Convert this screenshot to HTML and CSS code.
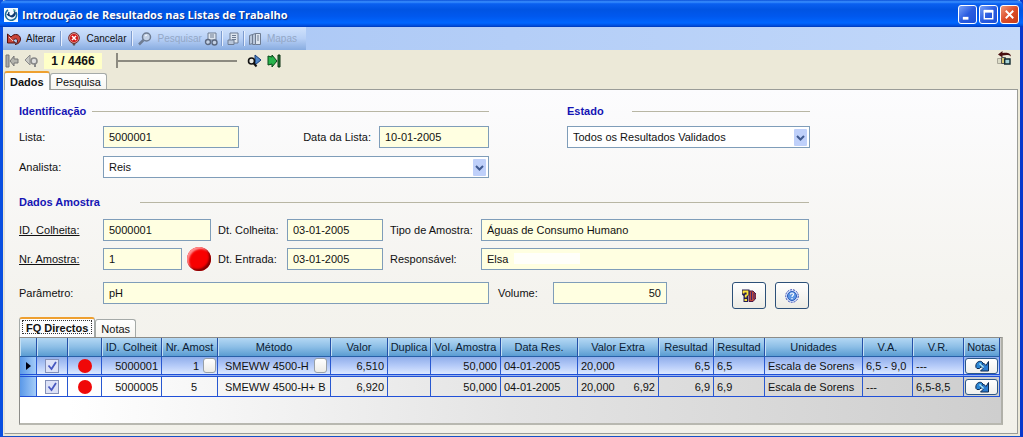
FILE: index.html
```html
<!DOCTYPE html>
<html lang="pt">
<head>
<meta charset="utf-8">
<title>Introdução de Resultados nas Listas de Trabalho</title>
<link rel="stylesheet" href="styles.css">
</head>
<body>
<div class="window">
  <header class="titlebar">
    <svg class="app-icon" viewBox="0 0 14 14" aria-hidden="true"><rect width="14" height="14" fill="#f4fbff"/><path d="M4 2a5.600 5.600 0 1 0 8 2" fill="none" stroke="#1c6f9c" stroke-width="1.500"/><path d="M5 4a3.200 3.200 0 1 0 5-1M3 6c2 3 5 3 8-1" fill="none" stroke="#123c70" stroke-width="1.300"/><path d="M9 1l3 1-2 2z" fill="#49a8a8"/></svg>
    <h1 class="title">Introdução de Resultados nas Listas de Trabalho</h1>
    <div class="caption-buttons">
      <button class="caption" aria-label="Minimizar"><svg viewBox="0 0 16 16"><path d="M3 12h6" stroke="#fff" stroke-width="3"/></svg></button>
      <button class="caption" aria-label="Maximizar"><svg viewBox="0 0 16 16"><path d="M3.500 4.500h9v8h-9zM3 4h10" fill="none" stroke="#fff" stroke-width="1.500"/><path d="M3 4.500h10" stroke="#fff" stroke-width="3"/></svg></button>
      <button class="caption caption-close" aria-label="Fechar"><svg viewBox="0 0 16 16"><path d="M4 4l8 8M12 4l-8 8" stroke="#fff" stroke-width="2"/></svg></button>
    </div>
  </header>

  <div class="toolbar-row">
    <div class="toolbar" role="toolbar">
      <button class="tool"><svg class="icon" viewBox="0 0 14 14"><path d="M.5 2v9h8L6 8.500c2-2.500 4.500-2 4.500.5 0 1.500-1 2.500-2.500 3.500 3.500-.5 5.500-2.500 5.500-5.500 0-4.500-6-6.500-9.500-2z" fill="#c8463a" stroke="#501010"/><path d="M2 5l4 4" stroke="#f4c8c0"/></svg>Alterar</button>
      <span class="sep"></span>
      <button class="tool"><svg class="icon" viewBox="0 0 14 14"><path d="M5 9h4l-1 4.500H6z" fill="#555"/><circle cx="7" cy="6" r="5.300" fill="#e8b0a8" stroke="#702020"/><circle cx="7" cy="6" r="4" fill="#d01818"/><path d="M5 4l4 4M9 4L5 8" stroke="#fff" stroke-width="1.500"/></svg>Cancelar</button>
      <span class="sep"></span>
      <button class="tool" disabled><svg class="icon" viewBox="0 0 14 14"><circle cx="8.500" cy="5" r="4" fill="#c4d2e6" stroke="#6e7c92" stroke-width="1.500"/><path d="M5.500 8L1 12.500" stroke="#6e7c92" stroke-width="2.500"/><path d="M7 4l2-1" stroke="#fff"/></svg>Pesquisar</button>
      <button class="tool tool-tight" disabled aria-label="Ver"><svg class="icon" viewBox="0 0 14 14"><path d="M4 1h8v7H4z" fill="#dde5ef" stroke="#6e7c92"/><path d="M6 3h4M6 5h4" stroke="#6e7c92"/><circle cx="4" cy="10" r="2.500" fill="#c4d2e6" stroke="#5c6980" stroke-width="1.400"/><circle cx="10.500" cy="10.500" r="2.500" fill="#c4d2e6" stroke="#5c6980" stroke-width="1.400"/></svg></button>
      <span class="sep sep-tight"></span>
      <button class="tool" disabled aria-label="Relatório"><svg class="icon" viewBox="0 0 14 14"><path d="M4 1h8v10H4z" fill="#dde5ef" stroke="#6e7c92"/><path d="M6 3.500h4M6 5.500h4M6 7.500h4" stroke="#6e7c92"/><path d="M2 8h6v4.500H2z" fill="#b8c6da" stroke="#6e7c92"/></svg></button>
      <span class="sep sep-tight"></span>
      <button class="tool" disabled><svg class="icon" viewBox="0 0 14 14"><path d="M1.500 3.500l3-1v9l-3 1zM4.500 2.500l3-1v11h-3z" fill="#b8c6da" stroke="#6e7c92"/><path d="M7.500 1.500h5v11h-5z" fill="#dde5ef" stroke="#6e7c92"/><path d="M9 4h2M9 6h2M9 8h2" stroke="#6e7c92"/></svg>Mapas</button>
    </div>
  </div>

  <div class="nav">
    <button class="nav-button" disabled aria-label="Primeiro"><svg class="icon" viewBox="0 0 14 14"><path d="M1 1h3v12H1z" fill="#aaa" stroke="#777"/><path d="M5 7l4-5v3h4v4H9v3z" fill="#b4b4ae" stroke="#777"/></svg></button>
    <button class="nav-button" disabled aria-label="Anterior"><svg class="icon" viewBox="0 0 14 14"><path d="M0 6l5-5v10z" fill="#c8c8c4" stroke="#8a8a8a"/><circle cx="9" cy="7" r="3" fill="#ddd" stroke="#888" stroke-width="1.600"/><path d="M10 9v4" stroke="#888" stroke-width="2"/></svg></button>
    <output class="counter">1 / 4466</output>
    <input class="slider" type="range" min="1" max="4466" value="1" aria-label="Registo">
    <button class="nav-button" aria-label="Seguinte"><svg class="icon" viewBox="0 0 14 14"><path d="M8 1l6 5-6 5z" fill="#4f86c8" stroke="#153a78"/><circle cx="4.500" cy="7" r="3" fill="#e8e8e0" stroke="#111" stroke-width="1.600"/><path d="M6.500 9l3 3.500" stroke="#111" stroke-width="2"/></svg></button>
    <button class="nav-button" aria-label="Último"><svg class="icon" viewBox="0 0 14 14"><path d="M1 2l4 1V1l5 6-5 6v-3l-4 1z" fill="#28b44c" stroke="#064818"/><path d="M11 1h2v12h-2z" fill="#28803c" stroke="#0a3010"/></svg></button>
    <button class="nav-button nav-exit" aria-label="Sair"><svg class="icon" viewBox="0 0 14 14"><path d="M1 3.500L5.500 0v2c4.500-1 8.500 0 8.500 3.500C12 3.500 9 4 5.500 4.500v2z" fill="#4a1010"/><path d="M.5 7.500h4v5h-4z" fill="#dcdcc8" stroke="#aaa89a"/><path d="M4.500 6.500h4v6h-4z" fill="#d8c878" stroke="#555"/><path d="M7.700 8h5.300v5H7.700z" fill="#a8d4d8" stroke="#102830" stroke-width="1.400"/></svg></button>
  </div>

  <div class="tabs" role="tablist">
    <button class="tab tab-active" role="tab" aria-selected="true">Dados</button>
    <button class="tab" role="tab" aria-selected="false">Pesquisa</button>
  </div>

  <main class="panel">
    <div class="groups">
      <section class="group group-id">
        <h2 class="legend">Identificação</h2>
        <div class="id-grid">
          <label for="lista">Lista:</label>
          <input class="field" id="lista" value="5000001">
          <label class="label-end" for="data">Data da Lista:</label>
          <input class="field" id="data" value="10-01-2005">
          <label for="analista">Analista:</label>
          <select class="field combo span-rest" id="analista"><option>Reis</option></select>
        </div>
      </section>
      <section class="group group-state">
        <h2 class="legend legend-state">Estado</h2>
        <select class="field combo" aria-label="Estado"><option>Todos os Resultados Validados</option></select>
      </section>
    </div>

    <section class="group group-sample">
      <h2 class="legend legend-sample">Dados Amostra</h2>
      <div class="sample-grid">
        <label for="colheita"><a class="link" href="#colheita">ID. Colheita:</a></label>
        <input class="field" id="colheita" value="5000001">
        <label class="label-inner" for="dtc">Dt. Colheita:</label>
        <input class="field" id="dtc" value="03-01-2005">
        <label class="label-inner" for="tipo">Tipo de Amostra:</label>
        <input class="field" id="tipo" value="Águas de Consumo Humano">
        <label for="nr"><a class="link" href="#nr">Nr. Amostra:</a></label>
        <div class="with-ball"><input class="field" id="nr" value="1"><span class="ball-box"><span class="ball ball-large"></span></span></div>
        <label class="label-inner" for="dte">Dt. Entrada:</label>
        <input class="field" id="dte" value="03-01-2005">
        <label class="label-inner" for="resp">Responsável:</label>
        <input class="field field-masked" id="resp" value="Elsa">
      </div>
      <div class="param-row">
        <label class="label-first" for="param">Parâmetro:</label>
        <input class="field param" id="param" value="pH">
        <label class="label-volume" for="volume">Volume:</label>
        <input class="field volume" id="volume" value="50">
        <div class="actions">
          <button class="action" aria-label="Consultar"><svg class="icon" viewBox="0 0 14 14"><path d="M7 2h4l3 3v4l-3 3.500H7z" fill="#c04838" stroke="#481848"/><path d="M9.500 3v8M12 4v6" stroke="#382878"/><path d="M0 .5h7.500v5L6 7v6H1.500V7L0 5.500z" fill="#241c50"/><path d="M1.500 4.500V2.500h4v3L3.700 6.500v2M2.500 11h2.500" fill="none" stroke="#ffe53a" stroke-width="1.800"/></svg></button>
          <button class="action" aria-label="Ajuda"><svg class="icon" viewBox="0 0 14 14"><circle cx="7" cy="7" r="6.300" fill="#dce8ff" stroke="#3448b0" stroke-dasharray="2 1"/><circle cx="7" cy="7" r="4.500" fill="#5f98e4" stroke="#2858b8"/><path d="M5.500 5.500c0-2 3-2 3 0 0 1-1.500 1-1.500 2.500M7 9v1.200" fill="none" stroke="#fff" stroke-width="1.200"/></svg></button>
        </div>
      </div>
    </section>

    <div class="tabs subtabs" role="tablist">
      <button class="tab tab-active tab-focus" role="tab" aria-selected="true">FQ Directos</button>
      <button class="tab" role="tab" aria-selected="false">Notas</button>
    </div>

    <div class="grid">
      <table class="results">
        <colgroup>
          <col class="w17"><col class="w31"><col class="w34"><col class="w60"><col class="w56"><col class="w113"><col class="w57"><col class="w43"><col class="w70"><col class="w77"><col class="w81"><col class="w55"><col class="w51"><col class="w98"><col class="w50"><col class="w51"><col class="w36">
        </colgroup>
        <thead>
          <tr><th></th><th></th><th></th><th>ID. Colheit</th><th>Nr. Amost</th><th>Método</th><th>Valor</th><th>Duplica</th><th>Vol. Amostra</th><th>Data Res.</th><th>Valor Extra</th><th>Resultad</th><th>Resultad</th><th>Unidades</th><th>V.A.</th><th>V.R.</th><th>Notas</th></tr>
        </thead>
        <tbody>
          <tr class="current">
            <td class="marker"><svg class="arrow" viewBox="0 0 5 8"><path d="M0 0l5 4-5 4z" fill="#001"/></svg></td>
            <td class="mid"><input class="check" type="checkbox" checked aria-label="Seleccionar 5000001"></td>
            <td class="mid"><span class="ball"></span></td>
            <td class="num">5000001</td>
            <td><div class="cell-end">1<button class="mini" aria-label="Escolher amostra"></button></div></td>
            <td class="method"><div class="cell-split">SMEWW 4500-H<button class="mini" aria-label="Escolher método"></button></div></td>
            <td class="num">6,510</td><td></td><td class="num">50,000</td><td>04-01-2005</td>
            <td>20,000</td>
            <td class="num">6,5</td><td>6,5</td><td>Escala de Sorens</td><td>6,5 - 9,0</td><td>---</td>
            <td class="mid"><button class="note" aria-label="Notas 5000001"><svg class="note-icon" viewBox="0 0 14 12"><path d="M1 7.500C0 3 3.500.5 6.500 1.500L9 4l-4.500 4.500H2z" fill="#2c86d4" stroke="#0c2850"/><path d="M13.500 1.500v9.500H5.500L8 8.500 5.500 6 8.500 3l2.500 2.500z" fill="#2c7cd0" stroke="#0c2850"/><path d="M4.500 3.500l4 4" stroke="#a8e4f8" stroke-width="1.600"/></svg></button></td>
          </tr>
          <tr>
            <td class="marker"></td>
            <td class="mid"><input class="check" type="checkbox" checked aria-label="Seleccionar 5000005"></td>
            <td class="mid"><span class="ball"></span></td>
            <td class="num">5000005</td>
            <td class="center">5</td>
            <td class="method">SMEWW 4500-H+ B</td>
            <td class="num">6,920</td><td></td><td class="num">50,000</td><td>04-01-2005</td>
            <td><div class="cell-split"><span>20,000</span><span>6,92</span></div></td>
            <td class="num">6,9</td><td>6,9</td><td>Escala de Sorens</td><td>---</td><td>6,5-8,5</td>
            <td class="mid"><button class="note" aria-label="Notas 5000005"><svg class="note-icon" viewBox="0 0 14 12"><path d="M1 7.500C0 3 3.500.5 6.500 1.500L9 4l-4.500 4.500H2z" fill="#2c86d4" stroke="#0c2850"/><path d="M13.500 1.500v9.500H5.500L8 8.500 5.500 6 8.500 3l2.500 2.500z" fill="#2c7cd0" stroke="#0c2850"/><path d="M4.500 3.500l4 4" stroke="#a8e4f8" stroke-width="1.600"/></svg></button></td>
          </tr>
        </tbody>
      </table>
    </div>
  </main>
</div>
</body>
</html>
```
FILE: styles.css
```css
* { box-sizing: border-box; }

body {
  margin: 0;
  font: 11px/14px "Liberation Sans", Arial, sans-serif;
  color: #111;
}

button, input, select { font: inherit; color: inherit; margin: 0; }
button { padding: 0; border: 0; background: none; }
svg { display: block; flex: none; }

.window {
  display: flex;
  flex-direction: column;
  min-height: 100vh;
  border: 3px solid #0a4fe0;
  border-right-color: #0838cc;
  border-top: 0;
  border-bottom: 2px solid #1450c8;
  background: #ece9d8;
}

/* Title bar */
.titlebar {
  display: flex;
  align-items: center;
  height: 27px;
  margin: 0 -3px;
  padding: 2px 4px 0 4px;
  background: linear-gradient(#0a50d8, #3a90ff 7%, #0a60f0 14%, #0054e3 35%, #0058ee 60%, #0066ff 85%, #0050e0 94%, #0038b8);
  border-radius: 6px 6px 0 0;
}
.app-icon { width: 14px; height: 14px; margin-right: 4px; }
.title {
  flex: 1;
  margin: 0;
  font-family: "Open Sans", "Noto Sans", sans-serif;
  font-size: 11px;
  font-weight: bold;
  color: #fff;
  text-shadow: 1px 1px 1px #0a2a80;
}
.caption-buttons { display: flex; gap: 2px; }
.caption {
  width: 19px;
  height: 19px;
  padding: 1px;
  border: 1px solid #fff;
  border-radius: 3px;
  background: linear-gradient(135deg, #7aa2f8, #2a5ce0 50%, #1c50d8);
}
.caption-close { background: linear-gradient(135deg, #f09878, #dc4c28 50%, #c83c18); }

/* Toolbar */
.toolbar-row { background: linear-gradient(90deg, #a6c4f4, #c2d8fa); }
.toolbar {
  display: flex;
  align-items: center;
  width: 303px;
  height: 23px;
  padding-left: 4px;
  background: linear-gradient(#d0e2fc, #b8d0f6 50%, #88ace0);
}
.tool {
  display: flex;
  align-items: center;
  gap: 5px;
  font-size: 10px;
}
.tool-tight { margin-left: 2px; }
.tool:disabled { color: #93a7c6; }
.icon { width: 14px; height: 14px; }
.sep {
  width: 2px;
  height: 15px;
  margin: 0 5px;
  border-left: 1px solid #7d9cd0;
  border-right: 1px solid #e8f0fd;
}
.sep-tight { margin: 0 3px; }

/* Record navigation */
.nav {
  display: flex;
  align-items: center;
  height: 21px;
  padding: 0 9px 0 2px;
}
.nav-button + .nav-button { margin-left: 6px; }
.counter {
  width: 58px;
  margin: 0 14px 0 5px;
  line-height: 16px;
  font-size: 12px;
  font-weight: bold;
  text-align: center;
  background: #ffffc8;
}
.slider {
  appearance: none;
  width: 121px;
  height: 16px;
  margin-right: 10px;
  background: linear-gradient(#8c8a80, #8c8a80) center / 100% 2px no-repeat;
}
.slider::-webkit-slider-thumb {
  appearance: none;
  width: 2px;
  height: 15px;
  background: #8c8a80;
}
.nav .nav-exit { margin: 0 0 6px auto; }

/* Tabs */
.tabs {
  display: flex;
  align-items: flex-end;
  height: 18px;
  padding-left: 1px;
}
.tab {
  height: 16px;
  padding: 0 5px;
  border: 1px solid #a5aaa8;
  border-bottom: 0;
  border-radius: 3px 3px 0 0;
  background: linear-gradient(#fff, #f6f5f0);
}
.tab-active {
  z-index: 1;
  height: 19px;
  margin-bottom: -1px;
  border-top: 2px solid #eea030;
  background: #fcfcfe;
  font-weight: bold;
}

.panel {
  flex: 1;
  margin: 0 2px 2px 1px;
  padding: 14px 14px 8px 14px;
  border: 1px solid #9a9c98;
  border-left-color: #e4e2d8;
  background: linear-gradient(#fcfcfe, #f4f3ee 60%, #f2f1ea);
}

/* Form */
.groups { display: flex; gap: 78px; }
.group-id { width: 470px; }
.group-state { width: 243px; }
.group-sample { max-width: 790px; margin-top: 17px; }
.legend {
  display: flex;
  align-items: center;
  gap: 6px;
  margin: 0 0 8px;
  font-size: 11px;
  line-height: 14px;
  font-weight: bold;
  color: #1515b4;
}
.legend::after { content: ""; flex: 1; height: 1px; background: #b8b6a4; }
.legend-state { gap: 28px; }
.legend-sample { gap: 40px; margin-bottom: 10px; }

.field {
  width: 100%;
  height: 22px;
  min-width: 0;
  padding: 0 5px;
  border: 1px solid #7f9db9;
  border-radius: 0;
  background: #ffffe1;
}
.combo {
  appearance: none;
  background: url("data:image/svg+xml,%3Csvg xmlns='http://www.w3.org/2000/svg' width='13' height='17'%3E%3Crect width='13' height='17' rx='1' fill='%23bfd0fa'/%3E%3Cpath d='M3 7l3.500 3.500L10 7' fill='none' stroke='%23405a90' stroke-width='2'/%3E%3C/svg%3E") right 2px center no-repeat #fff;
}
.id-grid {
  display: grid;
  grid-template-columns: 84px 136px 140px 110px;
  align-items: center;
  row-gap: 8px;
}
.span-rest { grid-column: 2 / -1; }
.label-end { padding-right: 8px; text-align: right; }

.sample-grid {
  display: grid;
  grid-template-columns: 84px 108px 76px 96px 98px 1fr;
  align-items: center;
  row-gap: 7px;
}
.label-inner { padding-left: 7px; white-space: nowrap; }
.link { color: inherit; }
.field-masked { background: linear-gradient(#fffffa, #fffffa) 32px 4px / 66px 11px no-repeat #ffffe1; }
.with-ball { display: flex; align-items: center; gap: 5px; }
.ball-box { flex: none; height: 22px; display: flex; align-items: center; }
.ball {
  display: block;
  flex: none;
  width: 14px;
  height: 14px;
  margin: 0 auto;
  border-radius: 50%;
  background: #f00808;
}
.ball-large {
  width: 24px;
  height: 24px;
  margin: -1px 0;
  background: #f80000;
  box-shadow: inset -2px -2px 2px #800000, inset 2px 2px 2px #ff9090, 0 0 2px #fff;
}

.param-row { display: flex; align-items: flex-start; margin-top: 12px; line-height: 22px; }
.label-first { width: 84px; }
.param { width: 386px; }
.label-volume { width: 64px; padding-left: 9px; }
.volume { width: 114px; text-align: right; }
.actions { display: flex; gap: 9px; margin-left: auto; }
.action {
  display: flex;
  align-items: center;
  justify-content: center;
  width: 34px;
  height: 27px;
  border: 1px solid #2c5078;
  border-radius: 3px;
  background: linear-gradient(#fff, #ecebe4);
}

/* Results grid */
.subtabs { height: 20px; margin-top: 8px; padding: 0; }
.subtabs .tab { height: 18px; padding: 0 5px; }
.subtabs .tab-active { height: 20px; margin: 0; padding: 0 1px; }
.subtabs .tab-focus { outline: 1px dotted #333; outline-offset: -4px; padding: 0 6px; }
.grid {
  min-height: 88px;
  padding-right: 5px;
  border: 1px solid #8c8c88;
  border-right: 2px solid #b0b0a8;
  border-bottom: 2px solid #b8b8b0;
  background: linear-gradient(90deg, #fff 5%, #e4e4e4 50%, #cecece);
}
.results { width: 100%; table-layout: fixed; border-collapse: separate; border-spacing: 0; }
.results th {
  height: 19px;
  padding: 0;
  border-right: 1px solid #2450a8;
  border-bottom: 1px solid #2860a8;
  box-shadow: inset 1px 0 #c4e0f4;
  background: linear-gradient(#b4d8f4, #8cbee6 50%, #5a9cd2);
  font-weight: normal;
  white-space: nowrap;
  overflow: hidden;
  color: #0c1c34;
}
.results td {
  height: 20px;
  padding: 0 3px;
  border-right: 1px solid #2858d0;
  border-bottom: 1px solid #2050d8;
  white-space: nowrap;
  overflow: hidden;
}
.current td {
  border-bottom: 3px double #2050d8;
  background: linear-gradient(#90aeea, #b4caf8 50%, #dce8ff);
}
.results .marker { background: linear-gradient(90deg, #5a98e8, #a4ccf8); padding-left: 6px; }
.results .mid { padding: 0; }
.results .num { text-align: right; }
.results .center { text-align: center; padding-left: 12px; }
.results .method { padding-left: 7px; }
.arrow { width: 5px; height: 8px; }
.cell-end, .cell-split { display: flex; align-items: center; gap: 4px; margin-right: -2px; }
.cell-end { justify-content: flex-end; }
.cell-split { justify-content: space-between; margin-right: 0; }
.mini {
  width: 13px;
  height: 15px;
  border: 1px solid #98a0a8;
  border-radius: 3px;
  background: linear-gradient(#fff, #ecebe6);
}
.check {
  appearance: none;
  display: block;
  width: 14px;
  height: 14px;
  margin: 0 auto;
  border: 1px solid #8490b8;
  background: #dde2f8;
}
.check:checked {
  background: url("data:image/svg+xml,%3Csvg xmlns='http://www.w3.org/2000/svg' width='12' height='12'%3E%3Cpath d='M2.500 5.500l3 3.500 4.500-7' fill='none' stroke='%234858c0' stroke-width='1.800'/%3E%3C/svg%3E") center no-repeat #dde2f8;
}
.note {
  display: flex;
  align-items: center;
  justify-content: center;
  width: 33px;
  height: 16px;
  margin: 0 auto;
  border: 1px solid #2c5888;
  border-radius: 3px;
  background: linear-gradient(#fff, #f0f0ec);
}
.note-icon { width: 14px; height: 12px; }

.w17 { width: 17px; }
.w31 { width: 31px; }
.w34 { width: 34px; }
.w36 { width: 36px; }
.w43 { width: 43px; }
.w50 { width: 50px; }
.w51 { width: 51px; }
.w55 { width: 55px; }
.w56 { width: 56px; }
.w57 { width: 57px; }
.w60 { width: 60px; }
.w70 { width: 70px; }
.w77 { width: 77px; }
.w81 { width: 81px; }
.w98 { width: 98px; }
.w113 { width: 113px; }
```
